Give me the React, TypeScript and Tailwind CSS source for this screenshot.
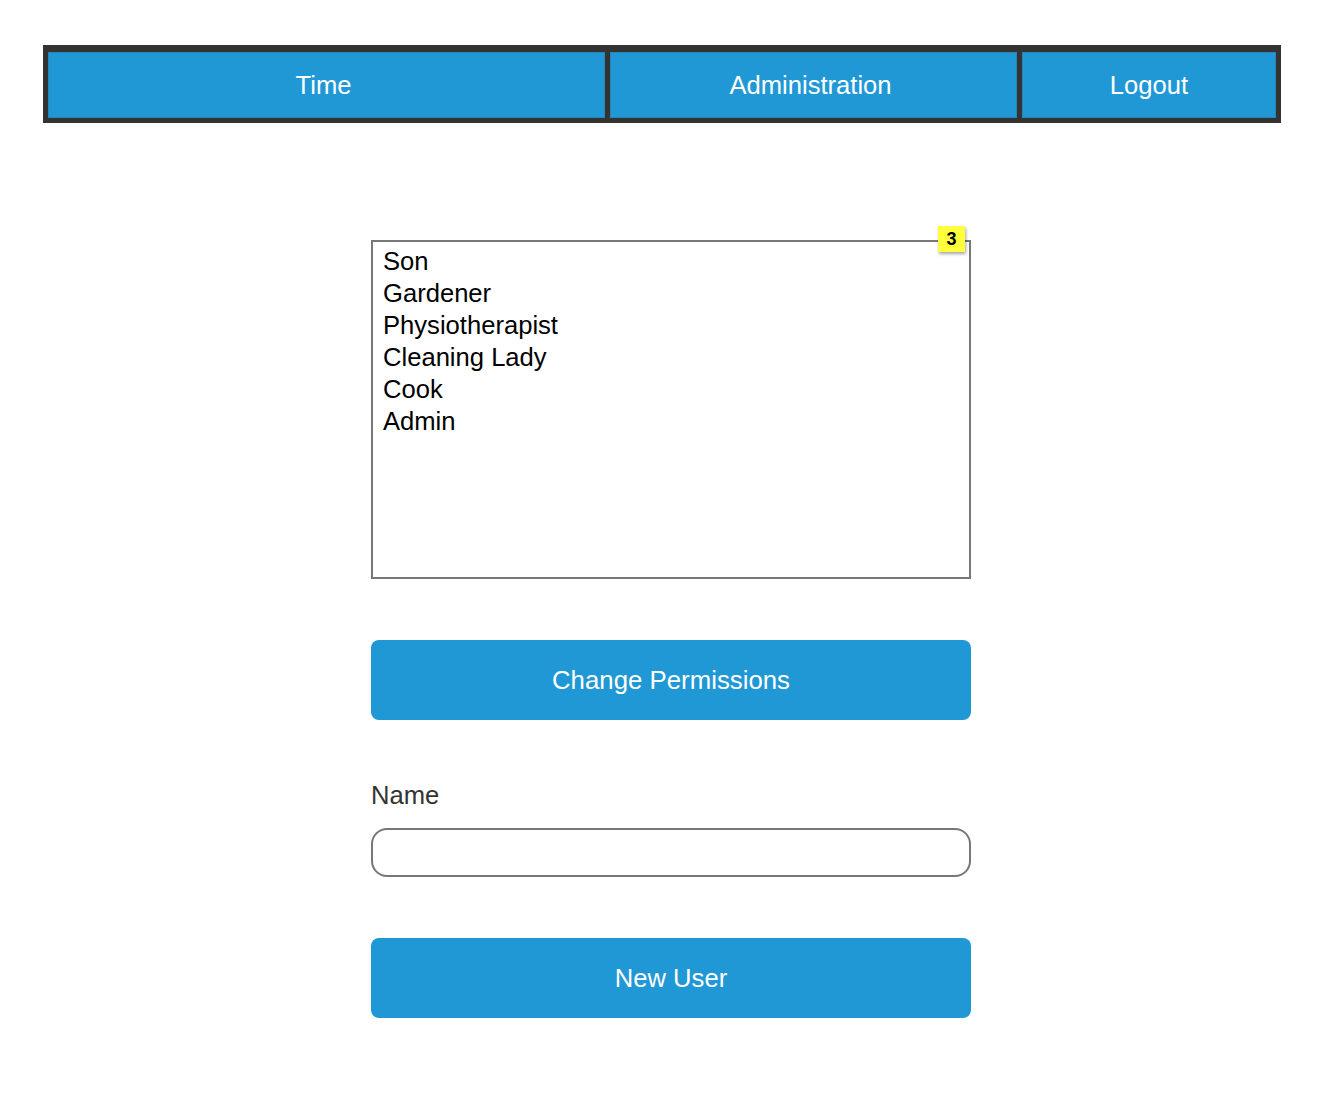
import React from "react";

const font = { fontFamily: '"Liberation Sans", Arial, Helvetica, sans-serif' };

export default function App() {
  const items = ["Son", "Gardener", "Physiotherapist", "Cleaning Lady", "Cook", "Admin"];
  return (
    <div className="min-h-[1116px] w-[1328px] bg-white" style={font}>
      <div className="pt-[45px] pl-[43px]">
        <nav className="flex w-[1238px] h-[78px] gap-[5px] bg-[#333333] p-[5px] pt-[7px]">
          <a className="flex w-[557px] h-[66px] items-center justify-center border border-[#2a85b5] bg-[#2098d5] pr-[6px] text-[25.6px] text-white">
            Time
          </a>
          <a className="flex w-[407px] h-[66px] items-center justify-center border border-[#2a85b5] bg-[#2098d5] pr-[6px] text-[25.6px] text-white">
            Administration
          </a>
          <a className="flex w-[254px] h-[66px] items-center justify-center border border-[#2a85b5] bg-[#2098d5] text-[25.6px] text-white">
            Logout
          </a>
        </nav>
      </div>

      <div className="ml-[371px] w-[600px] pt-[117px]">
        <div className="relative">
          <div className="h-[339px] w-[600px] border-2 border-[#777777] bg-white pl-[10px] pt-[3px]">
            {items.map((it) => (
              <div key={it} className="h-[32px] text-[25.6px] leading-[32px] text-black">
                {it}
              </div>
            ))}
          </div>
          <div className="absolute left-[567px] top-[-14px] flex h-[26px] w-[27px] items-center justify-center bg-[#ffff3c] text-[18px] font-bold text-black shadow-[1px_2px_3px_rgba(0,0,0,0.35)]">
            3
          </div>
        </div>

        <button className="mt-[61px] flex h-[80px] w-[600px] items-center justify-center rounded-[8px] bg-[#2098d5] text-[25.8px] text-white">
          Change Permissions
        </button>

        <div className="mt-[60px] h-[30px] text-[25.6px] leading-[30px] text-[#333333]">Name</div>

        <input
          className="mt-[18px] block h-[49px] w-[600px] rounded-[16px] border-2 border-[#777777] bg-white px-3 text-[24px] outline-none"
          type="text"
        />

        <button className="mt-[61px] flex h-[80px] w-[600px] items-center justify-center rounded-[8px] bg-[#2098d5] text-[25.6px] text-white">
          New User
        </button>
      </div>
    </div>
  );
}
